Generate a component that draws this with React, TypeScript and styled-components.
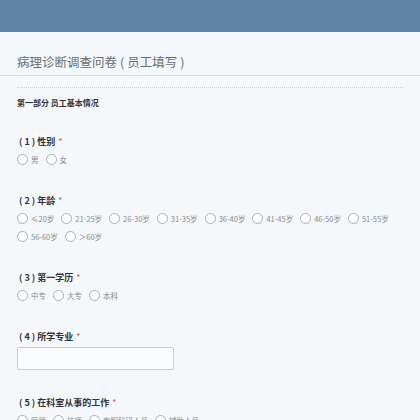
import React from "react";
import styled, { createGlobalStyle } from "styled-components";

const Global = createGlobalStyle`
  html, body { margin: 0; padding: 0; background: #f4f8fb; }
  body { font-family: "Noto Sans CJK SC", "Noto Sans", sans-serif; }
`;

const Page = styled.div`
  width: 420px;
  height: 420px;
  background: #f4f8fb;
  overflow: hidden;
`;

const Header = styled.div`
  height: 32px;
  background: #5f84a6;
`;

const TitleBar = styled.div`
  padding: 19px 17px 2px;
  border-bottom: 1px solid #d9dee3;
`;

const Title = styled.h1`
  margin: 0;
  font-size: 12.5px;
  line-height: 22px;
  font-weight: 400;
  color: #6b6b6b;
`;

const Paren = styled.span`
  margin: 0 3px;
`;

const Content = styled.div`
  padding: 0 17px;
`;

const Dotted = styled.div`
  margin-top: 11px;
  border-top: 1px dotted #c8ccd0;
`;

const Section = styled.div`
  margin-top: 8px;
  font-size: 8px;
  line-height: 14px;
  font-weight: 700;
  color: #333;
  margin-bottom: 24px;
`;

const Question = styled.div<{ $compact?: boolean }>`
  margin-bottom: ${(p) => (p.$compact ? 25 : 27)}px;
`;

const Label = styled.div`
  font-size: 9px;
  line-height: 16px;
  font-weight: 700;
  color: #333;
  margin-bottom: 2px;
  padding-left: 2px;
`;

const Num = styled.span`
  margin: 0 2px;
`;

const Star = styled.span`
  color: #e0524f;
  font-weight: 400;
  margin-left: 3px;
`;

const Options = styled.div`
  display: flex;
  flex-wrap: wrap;
  row-gap: 4px;
  column-gap: 7px;
`;

const Option = styled.label`
  display: flex;
  align-items: center;
  gap: 3px;
  height: 14px;
  font-size: 7.5px;
  color: #8a8a8a;
`;

const Circle = styled.span`
  box-sizing: border-box;
  width: 11px;
  height: 11px;
  border: 1px solid #a9afb5;
  border-radius: 50%;
  background: #fff;
  flex: none;
`;

const Input = styled.div`
  width: 155px;
  height: 21px;
  border: 1px solid #c6ccd2;
  border-radius: 2px;
  background: #fbfcfd;
`;

const questions: { n: number; title: string; opts?: string[] }[] = [
  { n: 1, title: "性别", opts: ["男", "女"] },
  {
    n: 2,
    title: "年龄",
    opts: ["≤20岁", "21-25岁", "26-30岁", "31-35岁", "36-40岁", "41-45岁", "46-50岁", "51-55岁", "56-60岁", "＞60岁"],
  },
  { n: 3, title: "第一学历", opts: ["中专", "大专", "本科"] },
  { n: 4, title: "所学专业" },
  { n: 5, title: "在科室从事的工作", opts: ["医师", "技师", "专职科研人员", "辅助人员"] },
];

export default function App() {
  return (
    <Page>
      <Global />
      <Header />
      <TitleBar>
        <Title>
          病理诊断调查问卷<Paren>(</Paren>员工填写<Paren>)</Paren>
        </Title>
      </TitleBar>
      <Content>
        <Dotted />
        <Section>第一部分 员工基本情况</Section>
        {questions.map((q) => (
          <Question key={q.n} $compact={!q.opts}>
            <Label>
              (<Num>{q.n}</Num>) {q.title}
              <Star>*</Star>
            </Label>
            {q.opts ? (
              <Options>
                {q.opts.map((o) => (
                  <Option key={o}>
                    <Circle />
                    {o}
                  </Option>
                ))}
              </Options>
            ) : (
              <Input />
            )}
          </Question>
        ))}
      </Content>
    </Page>
  );
}
